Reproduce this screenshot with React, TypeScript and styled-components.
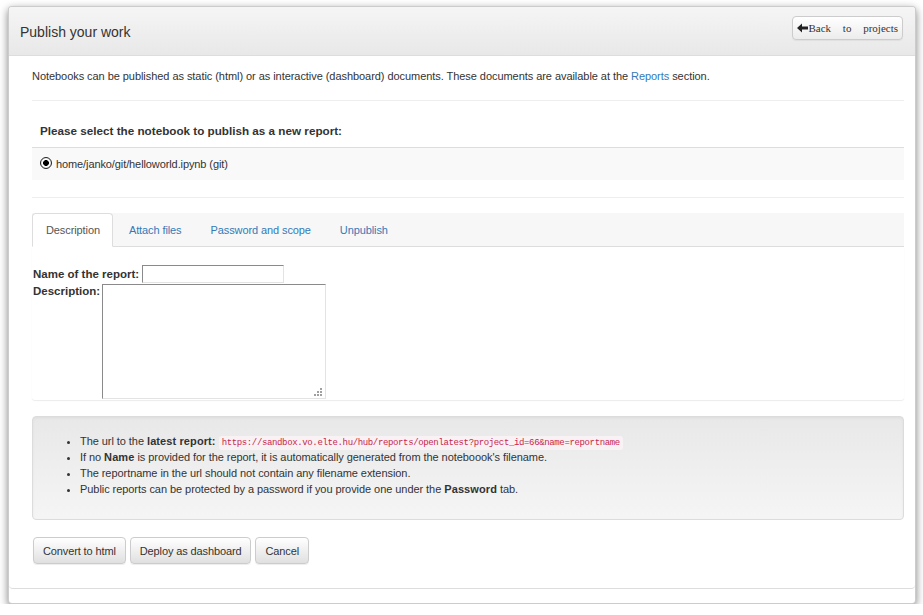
import React from 'react'
import styled, { createGlobalStyle } from 'styled-components'

const GlobalStyle = createGlobalStyle`
  html, body {
    margin: 0;
    padding: 0;
    background: #ffffff;
  }
  body {
    font-family: "Liberation Sans", Arial, sans-serif;
    color: #333;
    overflow: hidden;
  }
`

const Modal = styled.div`
  width: 906px;
  height: 596px;
  margin: 6px 0 0 8px;
  background: #fff;
  border: 1px solid rgba(0, 0, 0, 0.2);
  border-radius: 4px;
  box-shadow: 0 3px 9px rgba(0, 0, 0, 0.5);
  display: flex;
  flex-direction: column;
  overflow: hidden;
`

const Header = styled.div`
  height: 48px;
  flex: none;
  display: flex;
  align-items: center;
  justify-content: space-between;
  padding: 0 12px 0 11px;
  background: linear-gradient(to bottom, #f5f5f5 0%, #e8e8e8 100%);
  border-bottom: 1px solid #dddddd;
`

const Title = styled.h3`
  margin: 0;
  font-size: 14px;
  font-weight: normal;
  color: #333;
  padding-top: 2px;
`

const BackButton = styled.button`
  height: 24px;
  margin-top: -6px;
  padding: 0 4px 0 4px;
  display: flex;
  align-items: center;
  gap: 1px;
  font-family: "Liberation Serif", "Times New Roman", serif;
  font-size: 11px;
  word-spacing: 9px;
  color: #333;
  background: linear-gradient(to bottom, #ffffff 0%, #ececec 100%);
  border: 1px solid #cccccc;
  border-radius: 4px;
  box-shadow: 0 1px 1px rgba(0, 0, 0, 0.05);
`

const Body = styled.div`
  flex: none;
  padding: 0 11px 24px 23px;
  border-bottom: 1px solid #dddddd;
  border-radius: 0 0 4px 4px;
`

const Intro = styled.p`
  margin: 12px 0 0;
  font-size: 11px;
  line-height: 16px;
  letter-spacing: -0.055px;
`

const Link = styled.a`
  color: #337ab7;
  text-decoration: none;
`

const Rule = styled.hr<{ $top: number }>`
  margin: ${p => p.$top}px 0 0;
  border: 0;
  border-top: 1px solid #eeeeee;
`

const SelectTitle = styled.h4`
  margin: 21px 0 0;
  padding-left: 8px;
  font-size: 11.7px;
  line-height: 17px;
  font-weight: bold;
`

const Strip = styled.div`
  margin-top: 8px;
  height: 32px;
  display: flex;
  align-items: center;
  padding: 0 8px;
  gap: 4px;
  background: #f9f9f9;
  border-top: 1px solid #dddddd;
  font-size: 11px;
  letter-spacing: -0.1px;
`

const Radio = styled.span`
  width: 10px;
  height: 10px;
  border: 1px solid #222;
  border-radius: 50%;
  background: radial-gradient(circle, #000 0 2.6px, #fff 3.2px);
  margin-top: -3px;
  box-shadow: inset 0 0 1px rgba(0, 0, 0, 0.4);
`

const Tabs = styled.div`
  margin-top: 15px;
  height: 33px;
  display: flex;
  align-items: flex-end;
  background: #f7f7f7;
  border-bottom: 1px solid #dddddd;
`

const Tab = styled.div<{ $active?: boolean }>`
  height: 34px;
  margin-right: 2px;
  margin-bottom: -1px;
  padding: 0 12px 0 13px;
  display: flex;
  align-items: center;
  font-size: 11px;
  letter-spacing: -0.1px;
  color: ${p => (p.$active ? '#555' : '#337ab7')};
  background: ${p => (p.$active ? '#fff' : 'transparent')};
  border: 1px solid ${p => (p.$active ? '#dddddd' : 'transparent')};
  border-bottom-color: ${p => (p.$active ? '#fff' : 'transparent')};
  border-radius: 4px 4px 0 0;
  box-sizing: border-box;
`

const TabPane = styled.div`
  height: 153px;
  padding: 18px 0 0 1px;
  box-sizing: border-box;
  background: #fff;
  box-shadow: 0 1px 1px rgba(0, 0, 0, 0.08);
  border-radius: 0 0 3px 3px;
`

const FormRow = styled.div<{ $top?: boolean }>`
  display: flex;
  align-items: ${p => (p.$top ? 'flex-start' : 'center')};
  gap: 3px;
`

const Label = styled.label`
  font-size: 11.5px;
  font-weight: bold;
  line-height: 16px;
`

const TextInput = styled.input`
  width: 142px;
  height: 18px;
  box-sizing: border-box;
  padding: 0 2px;
  border: 1px solid;
  border-color: #8a8a8a #e3e3e3 #e3e3e3 #8a8a8a;
  font-size: 11px;
  outline: none;
`

const AreaWrap = styled.span`
  position: relative;
  display: block;
  margin-top: 1px;
  margin-left: -1px;
`

const TextArea = styled.textarea`
  display: block;
  width: 224px;
  height: 115px;
  box-sizing: border-box;
  border: 1px solid;
  border-color: #8a8a8a #e3e3e3 #e3e3e3 #8a8a8a;
  font-size: 11px;
  outline: none;
  resize: none;
`

const Grip = styled.svg`
  position: absolute;
  right: 4px;
  bottom: 3px;
`

const Well = styled.div`
  margin-top: 16px;
  height: 104px;
  box-sizing: border-box;
  padding: 16px 0 0;
  background: linear-gradient(to bottom, #e8e8e8 0%, #f5f5f5 100%);
  border: 1px solid #dcdcdc;
  border-radius: 4px;
  box-shadow: inset 0 1px 3px rgba(0, 0, 0, 0.05), 0 1px 0 rgba(255, 255, 255, 0.1);
`

const Notes = styled.ul`
  margin: 0;
  padding-left: 47px;
  font-size: 11px;
  line-height: 16px;
  letter-spacing: -0.06px;
  color: #333;

  b {
    letter-spacing: 0.1px;
  }
`

const Code = styled.code`
  font-family: "Liberation Mono", "Courier New", monospace;
  font-size: 9px;
  line-height: 1;
  letter-spacing: -0.36px;
  color: #c7254e;
  background: #f9f2f4;
  border-radius: 3px;
  padding: 2px 3px;
  margin-left: 3px;
`

const Actions = styled.div`
  margin-top: 17px;
  display: flex;
  gap: 4px;
  padding-left: 1px;
`

const Button = styled.button`
  height: 27px;
  padding: 0 9px;
  font-family: "Liberation Sans", Arial, sans-serif;
  font-size: 11px;
  letter-spacing: -0.12px;
  color: #333;
  background: linear-gradient(to bottom, #ffffff 0%, #e0e0e0 100%);
  border: 1px solid #cccccc;
  border-radius: 4px;
  box-shadow: inset 0 1px 0 rgba(255, 255, 255, 0.15), 0 1px 1px rgba(0, 0, 0, 0.075);
`

const ArrowLeft = () => (
  <svg width="11" height="10" viewBox="0 0 11 10" aria-hidden="true">
    <path d="M0 5 L5 0.5 L5 3.4 L11 3.4 L11 6.6 L5 6.6 L5 9.5 Z" fill="#222" />
  </svg>
)

const ResizeGrip = () => (
  <Grip width="8" height="8" viewBox="0 0 8 8" aria-hidden="true">
    <g fill="#a0a0a0">
      <rect x="6" y="0" width="2" height="2" />
      <rect x="3" y="3" width="2" height="2" />
      <rect x="6" y="3" width="2" height="2" />
      <rect x="0" y="6" width="2" height="2" />
      <rect x="3" y="6" width="2" height="2" />
      <rect x="6" y="6" width="2" height="2" />
    </g>
  </Grip>
)

export default function App() {
  return (
    <>
      <GlobalStyle />
      <Modal>
        <Header>
          <Title>Publish your work</Title>
          <BackButton>
            <ArrowLeft />
            <span>Back to projects</span>
          </BackButton>
        </Header>
        <Body>
          <Intro>
            Notebooks can be published as static (html) or as interactive (dashboard) documents. These
            documents are available at the <Link href="#">Reports</Link> section.
          </Intro>
          <Rule $top={16} />
          <SelectTitle>Please select the notebook to publish as a new report:</SelectTitle>
          <Strip>
            <Radio />
            <span>home/janko/git/helloworld.ipynb (git)</span>
          </Strip>
          <Rule $top={17} />
          <Tabs>
            <Tab $active>Description</Tab>
            <Tab>Attach files</Tab>
            <Tab>Password and scope</Tab>
            <Tab>Unpublish</Tab>
          </Tabs>
          <TabPane>
            <FormRow>
              <Label>Name of the report:</Label>
              <TextInput type="text" />
            </FormRow>
            <FormRow $top>
              <Label>Description:</Label>
              <AreaWrap>
                <TextArea />
                <ResizeGrip />
              </AreaWrap>
            </FormRow>
          </TabPane>
          <Well>
            <Notes>
              <li>
                The url to the <b>latest report:</b>
                <Code>https://sandbox.vo.elte.hu/hub/reports/openlatest?project_id=66&amp;name=reportname</Code>
              </li>
              <li>
                If no <b>Name</b> is provided for the report, it is automatically generated from the noteboook's
                filename.
              </li>
              <li>The reportname in the url should not contain any filename extension.</li>
              <li>
                Public reports can be protected by a password if you provide one under the <b>Password</b> tab.
              </li>
            </Notes>
          </Well>
          <Actions>
            <Button>Convert to html</Button>
            <Button>Deploy as dashboard</Button>
            <Button>Cancel</Button>
          </Actions>
        </Body>
      </Modal>
    </>
  )
}
